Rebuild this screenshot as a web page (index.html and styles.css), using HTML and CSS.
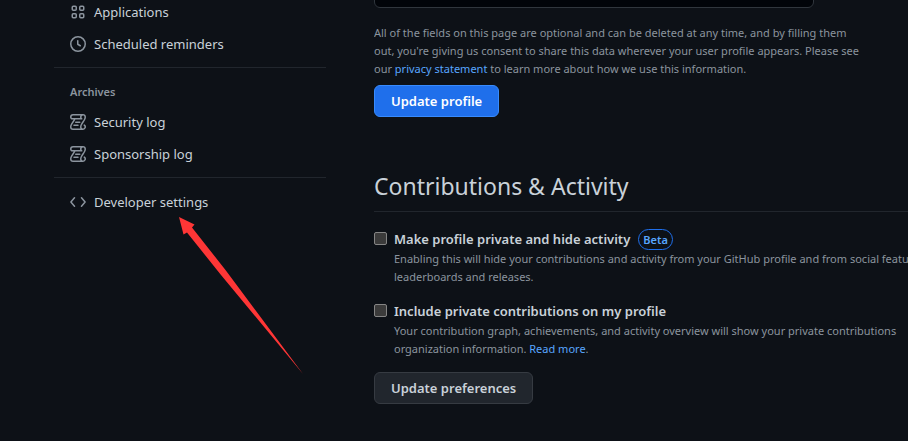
FILE: index.html
```html
<!DOCTYPE html>
<html lang="en">
<head>
<meta charset="utf-8">
<title>Profile settings</title>
<link rel="stylesheet" href="styles.css">
</head>
<body>
<svg class="sprite" aria-hidden="true">
  <symbol id="log" viewBox="0 0 16 16"><path fill="currentColor" d="M5 8.250a.75.75 0 0 1 .75-.75h4a.75.75 0 0 1 0 1.500h-4A.75.75 0 0 1 5 8.250ZM4 10.500A.75.75 0 0 0 4 12h4a.75.75 0 0 0 0-1.500H4ZM13 0c1.654 0 3 1.328 3 3 0 .982-.338 1.933-.783 2.818-.443.879-1.028 1.758-1.582 2.588l-.011.017c-.568.853-1.104 1.659-1.501 2.446-.398.789-.623 1.494-.623 2.136a1.500 1.500 0 1 0 2.333-1.248.75.75 0 0 1 .834-1.246A3 3 0 0 1 13 16H3a3 3 0 0 1-3-3c0-1.582.891-3.135 1.777-4.506.209-.322.418-.637.623-.946.473-.709.923-1.386 1.287-2.048H2.510c-.576 0-1.381-.133-1.907-.783A2.680 2.680 0 0 1 0 3a3 3 0 0 1 3-3Zm0 1.500A1.500 1.500 0 0 0 11.500 3c0 .476.223.834.667 1.132A.75.75 0 0 1 11.750 5.500H5.368c-.467 1.003-1.141 2.015-1.773 2.963-.192.289-.381.571-.558.845C2.130 10.711 1.500 11.916 1.500 13A1.500 1.500 0 0 0 3 14.500h7.401A2.989 2.989 0 0 1 10 13c0-.979.338-1.928.784-2.812.441-.874 1.023-1.748 1.575-2.576l.017-.026c.568-.853 1.103-1.658 1.501-2.448.398-.79.623-1.497.623-2.138 0-.838-.669-1.500-1.500-1.500ZM3 1.500A1.500 1.500 0 0 0 1.500 3c0 .321.1.569.27.778.097.12.325.222.74.222h7.674A2.737 2.737 0 0 1 10 3c0-.546.146-1.059.401-1.500Z"/></symbol>
</svg>
<div class="layout">
  <nav class="sidebar" aria-label="Settings">
    <a class="item" href="#applications"><svg class="icon" viewBox="0 0 16 16" aria-hidden="true"><g fill="none" stroke="currentColor" stroke-width="1.5"><rect x="2.250" y="2.250" width="4" height="4" rx="1"/><rect x="9.750" y="2.250" width="4" height="4" rx="1"/><rect x="2.250" y="9.750" width="4" height="4" rx="1"/><rect x="9.750" y="9.750" width="4" height="4" rx="1"/></g></svg>Applications</a>
    <a class="item" href="#reminders"><svg class="icon" viewBox="0 0 16 16" aria-hidden="true"><g fill="none" stroke="currentColor" stroke-width="1.5" stroke-linecap="round" stroke-linejoin="round"><circle cx="8" cy="8" r="7.250"/><path d="M7.750 4.750v3.500l2.500 1.500"/></g></svg>Scheduled reminders</a>
    <hr class="divider">
    <h2 class="group">Archives</h2>
    <a class="item" href="#security-log"><svg class="icon" aria-hidden="true"><use href="#log"/></svg>Security log</a>
    <a class="item" href="#sponsorship-log"><svg class="icon" aria-hidden="true"><use href="#log"/></svg>Sponsorship log</a>
    <hr class="divider">
    <a class="item" href="#developer"><svg class="icon" viewBox="0 0 16 16" aria-hidden="true"><path d="M4.500 3.750.900 8l3.600 4.250M11.500 3.750 15.100 8l-3.600 4.250" fill="none" stroke="currentColor" stroke-width="1.500" stroke-linecap="round" stroke-linejoin="round"/></svg>Developer settings</a>
  </nav>
  <main class="content">
    <form>
      <input class="field" type="text" aria-label="Location">
      <p class="note">All of the fields on this page are optional and can be deleted at any time, and by filling them<br>out, you're giving us consent to share this data wherever your user profile appears. Please see<br>our <a href="#privacy">privacy statement</a> to learn more about how we use this information.</p>
      <button class="button primary" type="button">Update profile</button>
    </form>
    <form class="activity">
      <h2 class="title">Contributions &amp; Activity</h2>
      <div class="option">
        <input class="check" type="checkbox" id="private">
        <div>
          <label class="name" for="private">Make profile private and hide activity <span class="badge">Beta</span></label>
          <p class="note">Enabling this will hide your contributions and activity from your GitHub profile and from social features<br>leaderboards and releases.</p>
        </div>
      </div>
      <div class="option">
        <input class="check" type="checkbox" id="include">
        <div>
          <label class="name" for="include">Include private contributions on my profile</label>
          <p class="note">Your contribution graph, achievements, and activity overview will show your private contributions<br>organization information. <a href="#more">Read more</a>.</p>
        </div>
      </div>
      <button class="button" type="button">Update preferences</button>
    </form>
  </main>
</div>
<svg class="arrow" viewBox="0 0 124 158" aria-hidden="true"><path d="M0 0 15.500 7.500 13 10.500 46.500 53 124 157 42 58 8 15.500 4.500 17.500Z" fill="#fe3636"/></svg>
</body>
</html>
```

FILE: styles.css
```css
* { box-sizing: border-box; }
body {
  margin: 0;
  min-height: 100vh;
  overflow: hidden;
  background: #0d1117;
  color: #c9d1d9;
  font: 13px/20px "Noto Sans", "Open Sans", sans-serif;
}
a { color: #58a6ff; text-decoration: none; }
.sprite { display: none; }
.layout {
  display: flex;
  gap: 48px;
  margin-top: -4px;
  padding-left: 54px;
}
.sidebar { flex: 0 0 272px; }
.item {
  display: flex;
  align-items: center;
  gap: 8px;
  padding: 6px 16px;
  color: #c9d1d9;
}
.icon { width: 16px; height: 16px; color: #8b949e; flex: none; }
.divider { margin: 7px 0 8px; border: 0; border-top: 1px solid #21262d; }
.group {
  margin: 0;
  padding: 7px 16px 5px;
  color: #8b949e;
  font-size: 11px;
  line-height: 18px;
  font-weight: 600;
}
.content { flex: 1; min-width: 0; overflow: hidden; white-space: nowrap; }
.field {
  display: block;
  width: 440px;
  height: 32px;
  margin: -20px 0 16px;
  border: 1px solid #30363d;
  border-radius: 6px;
  background: #010409;
  color: inherit;
  font: inherit;
}
.note {
  margin: 0;
  color: #8b949e;
  font-size: 11px;
  line-height: 18px;
}
.button {
  display: block;
  height: 32px;
  padding: 0 16px;
  border: 1px solid #363b42;
  border-radius: 6px;
  background: #21262d;
  color: #c9d1d9;
  font: 600 13px/20px "Noto Sans", "Open Sans", sans-serif;
}
.primary {
  margin-top: 7px;
  border-color: #388bfd;
  background: #1f6feb;
  color: #fff;
}
.activity { margin-top: 51px; }
.title {
  margin: 0 0 16px;
  padding-bottom: 7px;
  border-bottom: 1px solid #21262d;
  font-size: 23px;
  line-height: 36px;
  font-weight: 400;
}
.option { display: flex; gap: 7px; margin-bottom: 14px; }
.name { display: flex; align-items: center; gap: 8px; height: 22px; font-weight: 600; }
.check {
  appearance: none;
  flex: none;
  width: 13px;
  height: 13px;
  margin: 4px 0 0;
  border: 1px solid #858585;
  border-radius: 2px;
  background: #3b3b3b;
}
.badge {
  padding: 0 4px;
  border: 1px solid #1f6feb;
  border-radius: 20px;
  color: #58a6ff;
  font-size: 11px;
  line-height: 19px;
}
.arrow { position: absolute; left: 179px; top: 217px; width: 124px; height: 158px; }
```
